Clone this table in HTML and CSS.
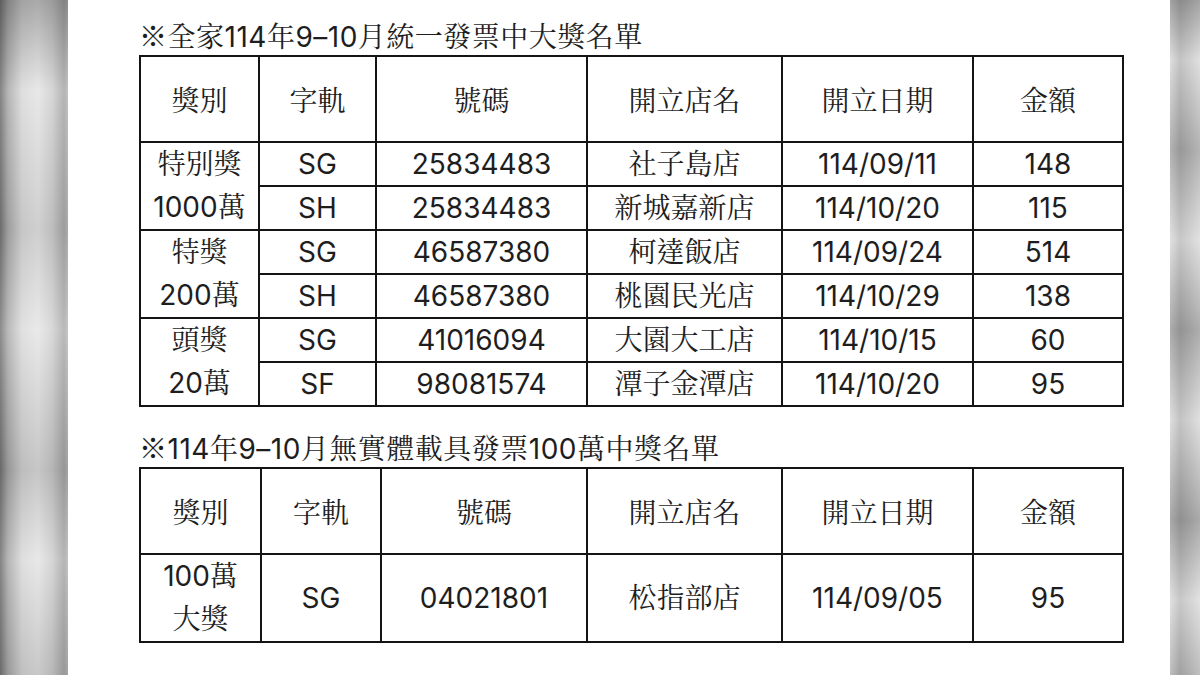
FILE: index.html
```html
<!DOCTYPE html>
<html lang="zh-Hant">
<head>
<meta charset="utf-8">
<title>全家114年9-10月統一發票中大獎名單</title>
<link rel="stylesheet" href="styles.css">
</head>
<body>
<div class="frame">
  <div class="edge edge-left"></div>
  <main class="sheet">
    <h2 class="caption"><span class="mark">※</span>全家114年9–10月統一發票中大獎名單</h2>
    <table class="prize t1">
      <colgroup>
        <col class="c-tier1"><col class="c-track1"><col class="c-num1"><col class="c-store"><col class="c-date"><col class="c-amt">
      </colgroup>
      <thead>
        <tr><th>獎別</th><th>字軌</th><th>號碼</th><th>開立店名</th><th>開立日期</th><th>金額</th></tr>
      </thead>
      <tbody>
        <tr><td rowspan="2" class="tier"><span>特別獎</span><span>1000萬</span></td><td>SG</td><td>25834483</td><td class="ming">社子島店</td><td>114/09/11</td><td>148</td></tr>
        <tr><td>SH</td><td>25834483</td><td class="ming">新城嘉新店</td><td>114/10/20</td><td>115</td></tr>
        <tr><td rowspan="2" class="tier"><span>特獎</span><span>200萬</span></td><td>SG</td><td>46587380</td><td class="ming">柯達飯店</td><td>114/09/24</td><td>514</td></tr>
        <tr><td>SH</td><td>46587380</td><td class="ming">桃園民光店</td><td>114/10/29</td><td>138</td></tr>
        <tr><td rowspan="2" class="tier"><span>頭獎</span><span>20萬</span></td><td>SG</td><td>41016094</td><td class="ming">大園大工店</td><td>114/10/15</td><td>60</td></tr>
        <tr><td>SF</td><td>98081574</td><td class="ming">潭子金潭店</td><td>114/10/20</td><td>95</td></tr>
      </tbody>
    </table>
    <h2 class="caption caption-second"><span class="mark">※</span>114年9–10月無實體載具發票100萬中獎名單</h2>
    <table class="prize t2">
      <colgroup>
        <col class="c-tier2"><col class="c-track2"><col class="c-num2"><col class="c-store"><col class="c-date"><col class="c-amt">
      </colgroup>
      <thead>
        <tr><th>獎別</th><th>字軌</th><th>號碼</th><th>開立店名</th><th>開立日期</th><th>金額</th></tr>
      </thead>
      <tbody>
        <tr class="tall"><td class="tier"><span>100萬</span><span>大獎</span></td><td>SG</td><td>04021801</td><td class="ming">松指部店</td><td>114/09/05</td><td>95</td></tr>
      </tbody>
    </table>
  </main>
  <div class="edge edge-right"></div>
</div>
</body>
</html>
```

FILE: styles.css
```css
html, body {
  margin: 0;
  padding: 0;
  background: #ffffff;
}

.frame {
  display: flex;
  width: 1200px;
  height: 675px;
  overflow: hidden;
}

.edge {
  flex: 0 0 auto;
  height: 100%;
}

.edge-left {
  width: 68px;
  background:
    linear-gradient(to bottom, rgba(60,60,60,0.35) 0, rgba(255,255,255,0.15) 90px, rgba(90,90,90,0.15) 230px, rgba(255,255,255,0.2) 330px, rgba(80,80,80,0.2) 470px, rgba(255,255,255,0.15) 560px, rgba(90,90,90,0.2) 675px),
    linear-gradient(to right, #6e6e6e 0, #a9a9a9 8px, #d9d9d9 22px, #e4e4e4 38px, #cfcfcf 52px, #a8a8a8 64px, #b8b8b8 68px);
}

.edge-right {
  width: 30px;
  background:
    linear-gradient(to bottom, rgba(70,70,70,0.35) 0, rgba(255,255,255,0.25) 60px, rgba(80,80,80,0.25) 150px, rgba(255,255,255,0.3) 240px, rgba(80,80,80,0.3) 330px, rgba(255,255,255,0.25) 420px, rgba(70,70,70,0.3) 520px, rgba(255,255,255,0.3) 600px, rgba(100,100,100,0.2) 675px),
    linear-gradient(to right, #d4d4d4 0, #b0b0b0 10px, #c2c2c2 20px, #d6d6d6 30px);
}

.sheet {
  flex: 1 1 auto;
  background: #ffffff;
  padding: 19px 0 0 71px;
  color: #1e1e1e;
}

.caption {
  margin: 0;
  height: 36px;
  font-family: Inter, "Liberation Sans", "Noto Serif CJK TC", "Noto Sans CJK TC", sans-serif;
  font-size: 28px;
  font-weight: 400;
  line-height: 36px;
  letter-spacing: 0.5px;
  white-space: nowrap;
  color: #1e1e1e;
}

.mark {
  font-family: "Noto Sans CJK TC", sans-serif;
  font-weight: 700;
  line-height: 1;
}

.caption-second {
  margin-top: 24px;
}

.prize {
  border-collapse: collapse;
  table-layout: fixed;
  width: 985px;
  font-family: Inter, "Liberation Sans", "Noto Sans CJK TC", sans-serif;
  font-size: 28px;
  color: #1e1e1e;
}

.prize th,
.prize td {
  border: 2px solid #141414;
  padding: 0;
  text-align: center;
  vertical-align: middle;
  white-space: nowrap;
}

.prize th {
  height: 84px;
  font-weight: 400;
  font-family: "Noto Serif CJK TC", "Noto Sans CJK TC", sans-serif;
}

.prize td {
  height: 42px;
  line-height: 42px;
}

.prize .ming,
.prize .tier {
  font-family: Inter, "Liberation Sans", "Noto Serif CJK TC", "Noto Sans CJK TC", sans-serif;
}

.tier span {
  display: block;
  line-height: 43px;
}

.prize .tall td {
  height: 86px;
}

.c-tier1 { width: 119px; }
.c-track1 { width: 117px; }
.c-num1 { width: 211px; }
.c-tier2 { width: 121px; }
.c-track2 { width: 120px; }
.c-num2 { width: 206px; }
.c-store { width: 195px; }
.c-date { width: 191px; }
.c-amt { width: 150px; }
```
